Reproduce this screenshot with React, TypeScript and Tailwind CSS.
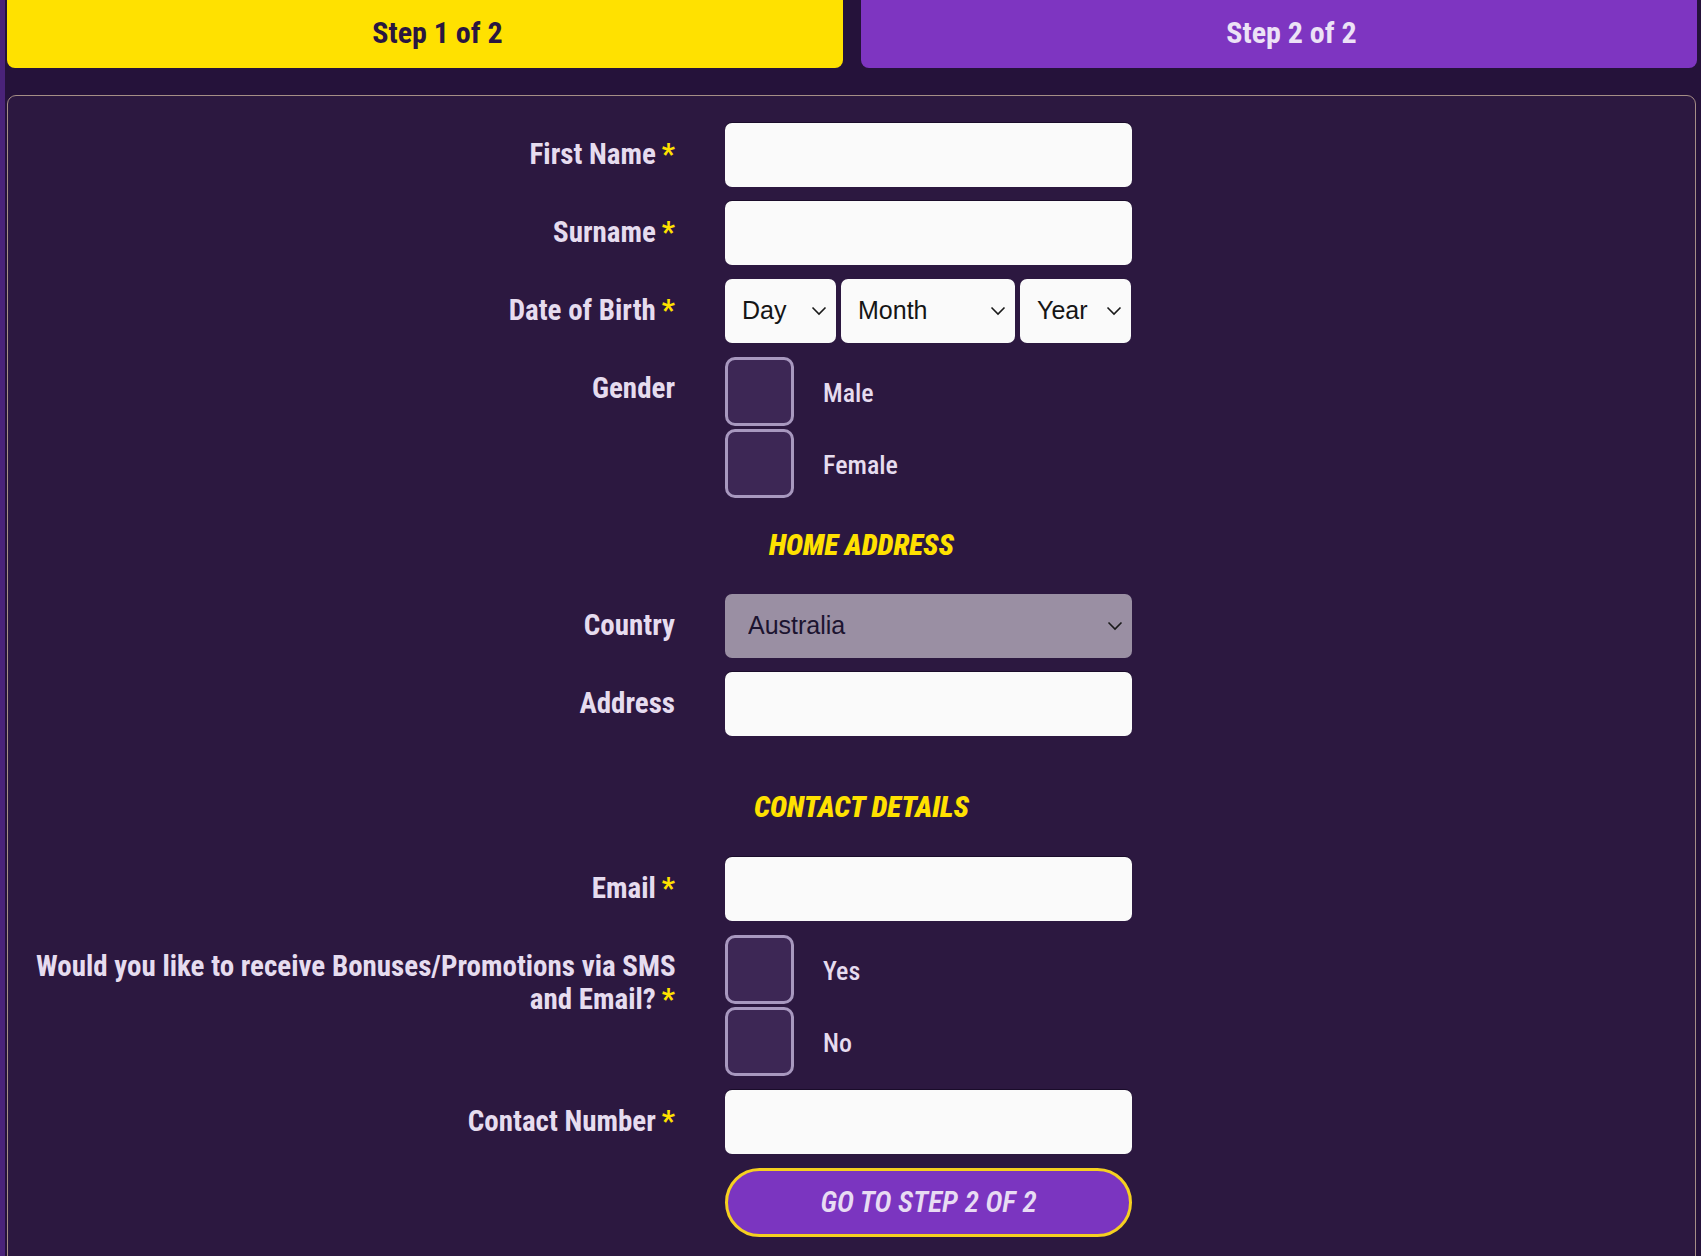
import type { ReactNode } from "react";

const label =
  "font-['Roboto_Condensed','DejaVu_Sans_Condensed','Liberation_Sans_Narrow',Roboto,sans-serif] font-stretch-condensed";

function Req() {
  return <span className="ml-[6px] text-[#ffe100]">*</span>;
}

function Row({ title, children }: { title: ReactNode; children: ReactNode }) {
  return (
    <div className="grid grid-cols-[667px_407px] gap-x-[50px]">
      <div
        className={`${label} pl-[28px] pt-[15px] text-right text-[29px] font-bold leading-[33px] text-[#e6dcef]`}
      >
        {title}
      </div>
      <div>{children}</div>
    </div>
  );
}

function TextInput() {
  return (
    <input
      type="text"
      className="block h-[64px] w-full rounded-[7px] bg-[#fafafa] shadow-[0_-1px_0_#1a0c2a] outline-none"
    />
  );
}

function Chevron() {
  return (
    <svg
      className="pointer-events-none absolute right-[9px] top-1/2 -translate-y-1/2"
      width="16"
      height="10"
      viewBox="0 0 16 10"
      fill="none"
      stroke="#1a1a1a"
      strokeWidth="1.6"
    >
      <path d="M1.5 1.5 8 8l6.5-6.5" />
    </svg>
  );
}

function Select({ value, className }: { value: string; className: string }) {
  return (
    <div className={`relative ${className}`}>
      <select
        defaultValue={value}
        className="block h-[64px] w-full appearance-none rounded-[7px] bg-[#fafafa] pl-[17px] font-['Liberation_Sans',Arial,sans-serif] text-[25px] text-[#151515] outline-none"
      >
        <option>{value}</option>
      </select>
      <Chevron />
    </div>
  );
}

function Check({ text }: { text: string }) {
  return (
    <label className="flex h-[69px] items-center gap-[29px]">
      <input
        type="checkbox"
        className="h-[69px] w-[69px] shrink-0 appearance-none rounded-[10px] border-[3px] border-[#a898bf] bg-[#3d2755]"
      />
      <span className={`${label} pt-[4px] text-[26px] font-medium text-[#e6dcef]`}>{text}</span>
    </label>
  );
}

function Heading({ text, className }: { text: string; className: string }) {
  return (
    <div
      className={`${label} flex items-center justify-center pl-[20px] text-[29px] font-black italic uppercase text-[#ffe100] ${className}`}
    >
      {text}
    </div>
  );
}

export default function App() {
  return (
    <div className="min-h-screen border-l-[5px] border-[#4a2379] bg-[#25123a] pb-10">
      <div className="flex gap-[18px] pl-[2px] pr-[4px]">
        <div
          className={`${label} flex h-[68px] flex-1 items-center justify-center rounded-b-[8px] bg-[#ffe100] pb-[4px] pl-[25px] text-[30px] font-bold text-[#2a1640]`}
        >
          Step 1 of 2
        </div>
        <div
          className={`${label} flex h-[68px] flex-1 items-center justify-center rounded-b-[8px] bg-[#7e35c1] pb-[4px] pl-[25px] text-[30px] font-bold text-[#ece2f6]`}
        >
          Step 2 of 2
        </div>
      </div>

      <div className="ml-[2px] mr-[5px] mt-[27px] flex flex-col gap-[14px] rounded-[9px] border border-[#a58e86] bg-[#2c1840] pb-[30px] pt-[27px]">
        <Row
          title={
            <>
              First Name
              <Req />
            </>
          }
        >
          <TextInput />
        </Row>
        <Row
          title={
            <>
              Surname
              <Req />
            </>
          }
        >
          <TextInput />
        </Row>
        <Row
          title={
            <>
              Date of Birth
              <Req />
            </>
          }
        >
          <div className="flex gap-[5px]">
            <Select value="Day" className="w-[111px]" />
            <Select value="Month" className="w-[174px]" />
            <Select value="Year" className="w-[111px]" />
          </div>
        </Row>
        <Row title="Gender">
          <div className="flex flex-col gap-[3px]">
            <Check text="Male" />
            <Check text="Female" />
          </div>
        </Row>

        <Heading text="Home Address" className="h-[68px]" />

        <Row title="Country">
          <div className="relative">
            <select
              defaultValue="Australia"
              className="block h-[64px] w-full appearance-none rounded-[7px] bg-[#9a8fa3] pl-[23px] font-['Liberation_Sans',Arial,sans-serif] text-[25px] text-[#1c1430] outline-none"
            >
              <option>Australia</option>
            </select>
            <Chevron />
          </div>
        </Row>
        <Row title="Address">
          <TextInput />
        </Row>

        <Heading text="Contact Details" className="mt-[23px] h-[70px]" />

        <Row
          title={
            <>
              Email
              <Req />
            </>
          }
        >
          <TextInput />
        </Row>
        <Row
          title={
            <>
              <span className="whitespace-nowrap">Would you like to receive Bonuses/Promotions via SMS</span>
              <br />
              and Email?
              <Req />
            </>
          }
        >
          <div className="flex flex-col gap-[3px]">
            <Check text="Yes" />
            <Check text="No" />
          </div>
        </Row>
        <Row
          title={
            <>
              Contact Number
              <Req />
            </>
          }
        >
          <TextInput />
        </Row>
        <Row title="">
          <button
            className={`${label} h-[69px] w-full rounded-full border-[3px] border-[#f5d020] bg-[#7b35c0] text-[29px] font-semibold italic text-[#e8dcf3]`}
          >
            GO TO STEP 2 OF 2
          </button>
        </Row>
      </div>
    </div>
  );
}
